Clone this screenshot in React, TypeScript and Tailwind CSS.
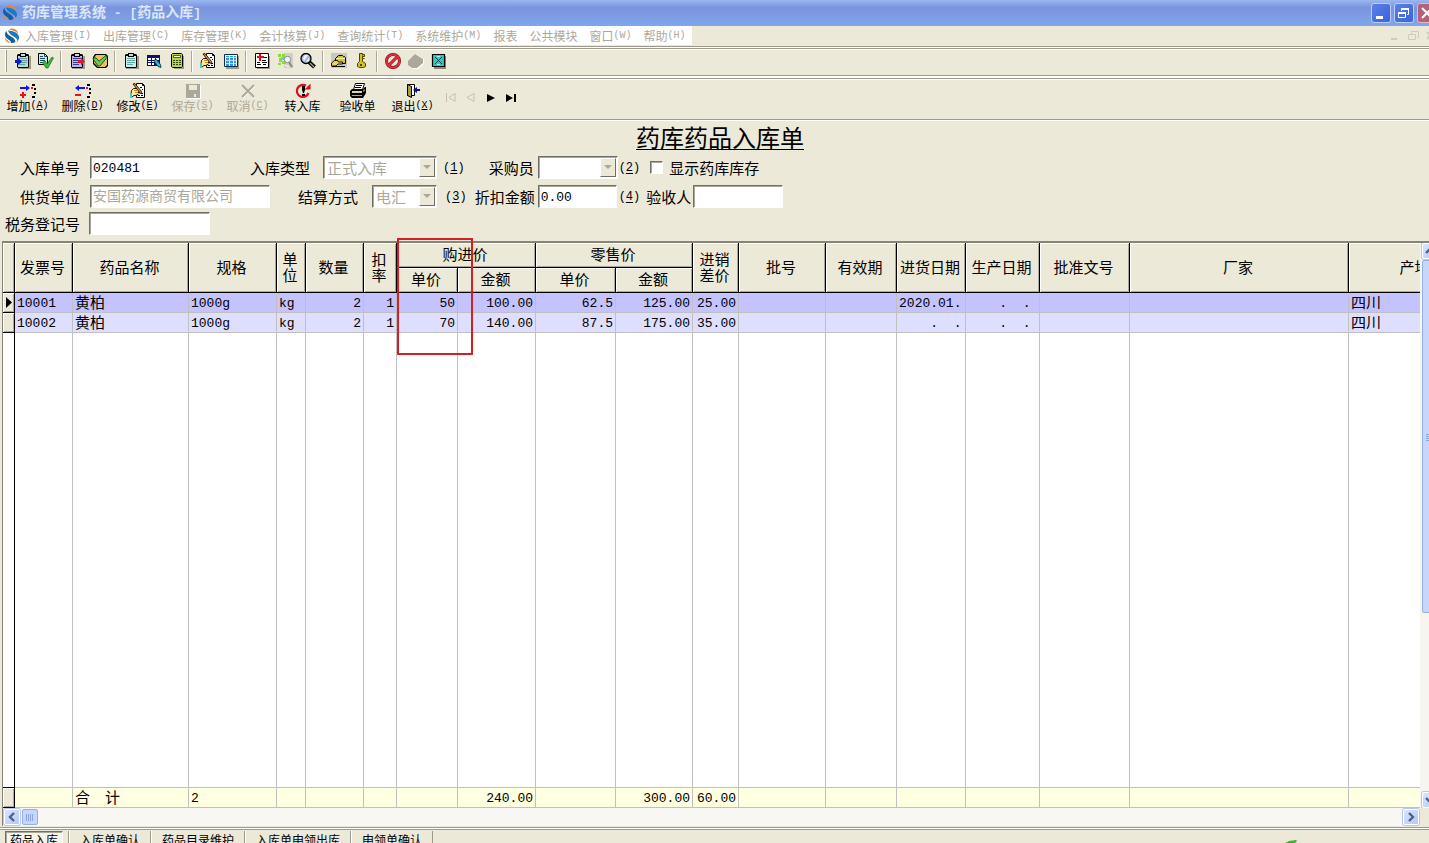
import React from 'react';

const BEVEL = 'shadow-[inset_1px_1px_0_#fff,inset_-1px_-1px_0_#aca899]';
const SUNKEN =
  'border border-t-[#716f64] border-l-[#716f64] border-r-white border-b-white shadow-[inset_1px_1px_0_#aca899]';

const menus = [
  { label: '入库管理', hotkey: 'I' },
  { label: '出库管理', hotkey: 'C' },
  { label: '库存管理', hotkey: 'K' },
  { label: '会计核算', hotkey: 'J' },
  { label: '查询统计', hotkey: 'T' },
  { label: '系统维护', hotkey: 'M' },
  { label: '报表' },
  { label: '公共模块' },
  { label: '窗口', hotkey: 'W' },
  { label: '帮助', hotkey: 'H' },
];

const Logo = () => (
  <svg className="shrink-0" width="16" height="16" viewBox="0 0 16 16" aria-hidden="true">
    <path d="M5 1.500C8-.5 13 .5 14.500 6 12 3 9 2.500 5 1.500z" fill="#ea8a26" />
    <path d="M4 2.500c5 .5 10.500 2 11 6.500.2 2-.8 3.500-1.500 4C13 8 5 8 4 2.500z" fill="#1b78c4" />
    <path d="M2.500 3C3 9 11 8 11.500 14c-1.500 1-3 1.200-4.500 1C7 11.500 1 11 1 7c0-2 .7-3.200 1.500-4z" fill="#155f9e" />
    <path d="M1 9.500c1 2.500 4 3 5 5.500-2.500-.3-5-2-5-5.500z" fill="#ea8a26" />
    <path d="M12.500 13.500l2-2c-.3 1.300-1 2.200-2 3z" fill="#ea8a26" />
  </svg>
);

/* Shared parts of the small 16px icons */
const Clipboard = ({ fill, line = '#4d8f8f' }: { fill: string; line?: string }) => (
  <>
    <path d="M3 3h13v13H3z" fill="#9c9a8c" />
    <path d="M3 1h10l1 1v12l-1 1H3l-1-1V2z" fill="#000" />
    <path d="M3 3h10v11H3z" fill={fill} />
    <path d="M5 0h6v4H5z" fill="#000" />
    <path d="M6 1h4v2H6z" fill="#c8d8e8" />
    <path d="M4 5.500h8M4 7.500h8M4 9.500h8M4 11.500h6" stroke={line} strokeWidth=".8" />
  </>
);

const EditSheet = () => (
  <>
    <path d="M6.500.5h6l2 2v12h-8z" fill="#fff" stroke="#000" />
    <path d="M12.500.5v2h2" stroke="#000" />
    <path d="M8 12.500h2M11 12.500h2M11 10.500h2M10 4.500h2M12 6.500h1" stroke="#000" />
    <path d="M1.500 7.500l2-2h5v2H8l1.500 1v1H8l1 1-1 1H7v1H4L2 14H.5z" fill="#ffe98c" stroke="#000" strokeWidth=".9" />
    <path d="M4 7.500h3M5 9.500h3" stroke="#c08a20" />
    <path d="M3 1l2-.5 6.500 8 .5 2.500-2-1z" fill="#d8902c" stroke="#000" strokeWidth=".8" />
    <path d="M0 10h2v5H0z" fill="#34d0d8" />
  </>
);

const icons: Record<string, React.ReactNode> = {
  receive: (
    <>
      <Clipboard fill="#b9d8d0" />
      <path d="M0 7h3V5l4 3.500L3 12v-2H0z" fill="#1018d8" />
    </>
  ),
  approve: (
    <>
      <path d="M.5.5h6l3 3v8h-9z" fill="#cdeaea" stroke="#000" />
      <path d="M6.500.5v3h3M2 3.500h3M2 5.500h5M2 7.500h5M2 9.500h3" stroke="#1c4a5a" />
      <path d="M4.500 9.500L7 8l2 3 5-7 1.500 1L10 15H8z" fill="#3fb544" stroke="#1c6a20" strokeWidth=".7" />
    </>
  ),
  issue: (
    <>
      <Clipboard fill="#b9b4ea" line="#1d1d7a" />
      <path d="M9 7h3V4.500l4 4-4 4V10H9z" fill="#e0142c" />
    </>
  ),
  audit: (
    <>
      <path d="M3 1h11l2 2v10l-2 2H5l-4-4V4z" fill="#000" />
      <path d="M4 2h9l2 2v8l-2 2H6L2 10V5z" fill="#f0c060" />
      <path d="M.8 5.500L4 4.800l3 3.400L14 2.500l1.200 1.700L8 13H6z" fill="#6ccc50" stroke="#154d16" strokeWidth=".9" />
    </>
  ),
  sheet: <Clipboard fill="#c9f0f0" />,
  query: (
    <>
      <path d="M1 2h13v11H1z" fill="#10106a" />
      <path d="M2 5h3v2H2zM6 5h3v2H6zM10 5h3v2h-3zM2 8h3v1H2zM6 8h3v1H6zM2 10h3v2H2zM6 10h2v2H6z" fill="#fff" />
      <path d="M7.500 7.500l3-1 4 5 .5 3-3-1z" fill="#35b6c4" stroke="#052a38" strokeWidth=".8" />
    </>
  ),
  calc: (
    <>
      <path d="M5 3h10v13H5z" fill="#9c9a8c" />
      <path d="M3.500.5h9l1 1v12l-1 1h-9l-1-1v-12z" fill="#b4d254" stroke="#000" />
      <path d="M4.500 2.500h7v2h-7z" fill="#f6ffd0" stroke="#34420c" strokeWidth=".8" />
      <path d="M4 7.500h8M4 9.500h8M4 11.500h8" stroke="#34420c" strokeDasharray="2 1" />
    </>
  ),
  edit: <EditSheet />,
  columns: (
    <>
      <path d="M3 3h13v13H3z" fill="#9c9a8c" />
      <path d="M1.500 1.500h13v12h-13z" fill="#fff" stroke="#0c2c50" />
      <path d="M3 3h3v10H3zM7 3h3v10H7zM11 3h2v10h-2z" fill="#2a9be0" />
      <path d="M2 4.500h12M2 7.500h12M2 10.500h12" stroke="#d6f0ff" strokeWidth=".8" />
    </>
  ),
  medical: (
    <>
      <path d="M3 3h13v13H3z" fill="#9c9a8c" />
      <path d="M1.500.5h13v14h-13z" fill="#fff" stroke="#000" />
      <path d="M5 1h2v2h3v2H7v3H5V5H3V3h2z" fill="#e01010" />
      <path d="M10 4.500h3M8 7.500h4M3 9.500h3M8 9.500h5M3 11.500h4M9 11.500h3" stroke="#000" />
    </>
  ),
  find: (
    <>
      <path d="M7 0h9v15H7z" fill="#d2cfc4" />
      <path d="M1 1h3v3H1zM5 1h3v5H5zM2 5h3v4H2zM5 8h4v3H5zM1 10h3v2H1z" fill="#8cd840" />
      <path d="M4 4h3v3H4z" fill="#7cc4d8" />
      <circle cx="10.500" cy="6.500" r="3.200" fill="#eef4f4" stroke="#8a8a84" />
      <path d="M12 9l3 5" stroke="#8a8a84" strokeWidth="2" />
      <path d="M8 12l4 2" stroke="#fff" />
    </>
  ),
  zoom: (
    <>
      <path d="M9 9l5.500 5" stroke="#000" strokeWidth="4" />
      <circle cx="6" cy="5.500" r="5" fill="#a9bbe0" stroke="#000" strokeWidth="1.300" />
      <path d="M3 5l2-3h3L4 8zM6 9l3-4v3z" fill="#eef4ff" />
      <path d="M10 10l4 4" stroke="#a4a4a4" strokeWidth="1.200" />
    </>
  ),
  hand: (
    <>
      <path d="M0 0h16v15H0z" fill="#c9c7c2" />
      <path d="M4.500 5.500l3-3h4l1 1h1l1 1v6h-10z" fill="#c9c832" stroke="#000" />
      <path d="M5 5.500h9" stroke="#f4f0a0" />
      <path d="M.5 10l3-2.500h3l1 1.500h4v2H7l-2 2H.5z" fill="#f0d060" stroke="#000" strokeWidth=".9" />
      <path d="M1 13.500h13" stroke="#000" />
    </>
  ),
  key: (
    <>
      <path d="M5.500.5h3v8l3 2v3l-2 1h-4l-2-1v-3l2-2z" fill="#d2c41e" stroke="#4c4400" />
      <path d="M8.500 1.500h2v2h-2M8.500 5.500h2" stroke="#4c4400" fill="#d2c41e" />
      <path d="M6 11h2v2H6z" fill="#4c4400" />
    </>
  ),
  forbid: (
    <>
      <circle cx="8" cy="8" r="6.500" fill="#eee4dc" stroke="#6e1414" strokeWidth="3" />
      <path d="M3.500 12.500l9-9" stroke="#6e1414" strokeWidth="3" />
      <circle cx="8" cy="8" r="6.500" stroke="#e03038" strokeWidth="2" />
      <path d="M3.500 12.500l9-9" stroke="#e03038" strokeWidth="2" />
    </>
  ),
  book: (
    <>
      <path d="M1 8.500L8 1l8 5v5l-6 5H5l-4-3z" fill="#fff" />
      <path d="M0 8l7-7 8 5v4l-6 5H4l-4-3z" fill="#aca899" />
    </>
  ),
  close: (
    <>
      <path d="M3 3h12v13H3z" fill="#8a887c" />
      <path d="M1.500 1.500h12v12h-12z" fill="#35c4bc" stroke="#000" strokeWidth="1.200" />
      <path d="M4 4l7 7M11 4l-7 7" stroke="#063f48" />
      <path d="M6 3.500h3M6 11.500h3" stroke="#aef0ec" />
    </>
  ),
  add: (
    <>
      <path d="M0 4h6V2l4 3-4 3V6H0z" fill="#1010f0" />
      <path d="M2 9h2v2h2v2H4v2H2v-2H0v-2h2z" fill="#f01010" />
      <path d="M12 1h3v2h-3zM14 5h2v2h-2zM14 9h2v2h-2zM12 13h3v2h-3z" fill="#000" />
      <path d="M11 4h2v2h-2z" fill="#f01010" />
    </>
  ),
  remove: (
    <>
      <path d="M10 4H4V2L0 5l4 3V6h6z" fill="#1010f0" />
      <path d="M0 11h6v2H0z" fill="#f01010" />
      <path d="M12 1h3v2h-3zM14 5h2v2h-2zM14 9h2v2h-2zM12 13h3v2h-3z" fill="#000" />
      <path d="M11 4h2v2h-2z" fill="#f01010" />
    </>
  ),
  save: (
    <>
      <path d="M2 2h14v14H2z" fill="#fff" />
      <path d="M1 1h14v14H1z" fill="#aca899" />
      <path d="M4 2h8v5H4zM9 11h2v3H9z" fill="#ece9d8" />
    </>
  ),
  cancel: (
    <>
      <path d="M3 3l12 12M15 3L3 15" stroke="#fff" />
      <path d="M2 2l12 12M14 2L2 14" stroke="#aca899" strokeWidth="1.800" />
    </>
  ),
  transfer: (
    <>
      <path d="M13.500 10A6 6 0 1 1 11 2.800" fill="none" stroke="#e01018" strokeWidth="2.200" />
      <path d="M9.500 6.500h6V.5z" fill="#e01018" />
      <path d="M7 3h3v4L9 10H8L7 7zM7 11h3v2H7z" fill="#000" />
    </>
  ),
  printer: (
    <>
      <path d="M5.500.5h9l-2 6h-9z" fill="#fff" stroke="#000" />
      <path d="M6 2.500h6M5 4.500h6" stroke="#000" />
      <path d="M2 6h11l2-2h1v6l-3 5H2l-2-2V8z" fill="#000" />
      <path d="M2 8h10v2H2z" fill="#d8d59a" />
      <path d="M2 12h10v1H2z" fill="#b8b430" />
      <path d="M13 7l2-1v2l-2 1z" fill="#88864a" />
    </>
  ),
  exit: (
    <>
      <path d="M2.500 1.500h7v11h-7z" fill="#fff" stroke="#000" />
      <path d="M2.500 1.500l4 2v11l-4-2z" fill="#a8a43a" stroke="#000" />
      <path d="M8 7l4-3v2h3v2h-3v2z" fill="#10108a" />
    </>
  ),
};

const Icon = ({ name }: { name: string }) => (
  <svg className="shrink-0" width="16" height="16" viewBox="0 0 16 16" fill="none" aria-hidden="true">
    {icons[name]}
  </svg>
);

const toolGroups = [
  ['receive', 'approve'],
  ['issue', 'audit'],
  ['sheet', 'query', 'calc'],
  ['edit', 'columns'],
  ['medical', 'find', 'zoom'],
  ['hand', 'key'],
  ['forbid', 'book', 'close'],
];

const actions = [
  { icon: 'add', label: '增加', hotkey: 'A' },
  { icon: 'remove', label: '删除', hotkey: 'D' },
  { icon: 'edit', label: '修改', hotkey: 'E' },
  { icon: 'save', label: '保存', hotkey: 'S', disabled: true },
  { icon: 'cancel', label: '取消', hotkey: 'C', disabled: true },
  { icon: 'transfer', label: '转入库' },
  { icon: 'printer', label: '验收单' },
  { icon: 'exit', label: '退出', hotkey: 'X' },
];

const navButtons = [
  { name: 'first', path: 'M1.500 1v9M10 1.500v8L4 5.500z', disabled: true },
  { name: 'prev', path: 'M9 1.500v8L2 5.500z', disabled: true },
  { name: 'next', path: 'M2 2v8l8-4z' },
  { name: 'last', path: 'M1 2v8l7-4zM9 2h2v8H9z' },
];

const tabs = ['入库单确认', '药品目录维护', '入库单申领出库', '申领单确认'];

type Column = { width: string; align?: string; cjk?: boolean };

const columns: Column[] = [
  { width: 'w-[58px]' },
  { width: 'w-[116px]', cjk: true },
  { width: 'w-[88px]' },
  { width: 'w-[29px]' },
  { width: 'w-[58px]', align: 'text-right' },
  { width: 'w-[33px]', align: 'text-right' },
  { width: 'w-[61px]', align: 'text-right' },
  { width: 'w-[78px]', align: 'text-right' },
  { width: 'w-[80px]', align: 'text-right' },
  { width: 'w-[77px]', align: 'text-right' },
  { width: 'w-[46px]', align: 'text-right' },
  { width: 'w-[87px]' },
  { width: 'w-[71px]' },
  { width: 'w-[69px]' },
  { width: 'w-[74px]' },
  { width: 'w-[90px]' },
  { width: 'w-[219px]' },
  { width: 'w-[134px]', cjk: true },
];

const rows = [
  ['10001', '黄柏', '1000g', 'kg', '2', '1', '50', '100.00', '62.5', '125.00', '25.00', '', '', '2020.01.', '    .  .', '', '', '四川'],
  ['10002', '黄柏', '1000g', 'kg', '2', '1', '70', '140.00', '87.5', '175.00', '35.00', '', '', '    .  .', '    .  .', '', '', '四川'],
];

const totals = ['', '合　计', '2', '', '', '', '', '240.00', '', '300.00', '60.00', '', '', '', '', '', '', ''];

const Hotkey = ({ letter }: { letter: string }) => (
  <span className="font-['Liberation_Mono',monospace] text-[10px]">
    (<span className="underline underline-offset-1">{letter}</span>)
  </span>
);

const FieldNumber = ({ n, className }: { n: number; className: string }) => (
  <span className={`font-['Liberation_Mono',monospace] text-[12px] ${className}`}>
    (<span className="underline underline-offset-2">{n}</span>)
  </span>
);

const Combo = ({ id, value, width }: { id: string; value: string; width: string }) => (
  <div className={`relative h-[23px] ${width}`}>
    <select
      id={id}
      disabled
      className={`block h-full w-full appearance-none rounded-none bg-white pl-[3px] text-[15px] leading-[21px] text-[#aca899] opacity-100 ${SUNKEN}`}
    >
      <option>{value}</option>
    </select>
    <span
      className="pointer-events-none absolute top-[2px] right-[2px] bottom-[2px] flex w-4 items-center justify-center border border-t-white border-l-white border-r-[#716f64] border-b-[#716f64] bg-[#ece9d8]"
    >
      <svg width="8" height="5" viewBox="0 0 8 5" aria-hidden="true">
        <path d="M0 0h8L4 4z" fill="#aca899" />
      </svg>
    </span>
  </div>
);

const ScrollButton = ({ path, label }: { path: string; label: string }) => (
  <button
    aria-label={label}
    className="flex h-4 w-4 shrink-0 items-center justify-center rounded-xs border border-white bg-gradient-to-br from-[#dbe5fe] to-[#b3c8f6] shadow-[0_0_0_1px_#b5c7ee]"
  >
    <svg width="10" height="10" viewBox="0 0 10 10" fill="none" stroke="#4d6185" strokeWidth="2.400" aria-hidden="true">
      <path d={path} />
    </svg>
  </button>
);

const GridRow = ({ cells, tone, current }: { cells: string[]; tone: string; current?: boolean }) => (
  <tr className={`h-5 ${tone}`}>
    <td className={`border-r border-b border-black bg-[#ece9d8] ${BEVEL}`}>
      {current && (
        <svg className="mx-auto" width="7" height="11" viewBox="0 0 7 11" aria-hidden="true">
          <path d="M1 0v11l6-5.500z" fill="#000" />
        </svg>
      )}
    </td>
    {columns.map((column, i) => (
      <td
        key={i}
        className={`overflow-hidden border-r border-b border-[#c0c0c0] px-[2px] leading-[17px] whitespace-pre ${
          column.cjk ? 'pb-[2px] text-[15px]' : "pt-[2px] font-['Liberation_Mono',monospace] text-[13px]"
        } ${column.align ?? ''}`}
      >
        {cells[i]}
      </td>
    ))}
  </tr>
);

const HeadCell = ({ children, ...rest }: React.ThHTMLAttributes<HTMLTableCellElement>) => (
  <th className={`border-r border-b border-black p-0 pr-[2px] pb-[2px] text-center leading-4 font-normal ${BEVEL}`} {...rest}>
    {children}
  </th>
);

const TitleBar = () => (
  <header className="flex h-[26px] shrink-0 items-center overflow-hidden bg-gradient-to-b from-[#9ab7ee] via-[#7a94de] via-30% to-[#80a6ea] pl-[2px]">
    <Logo />
    <h1 className="ml-1 flex-1 pb-[2px] text-[14px] leading-6 font-bold whitespace-pre text-[#dce6fa]">
      药库管理系统<span className="font-['Liberation_Mono',monospace] text-[13px]"> - [</span>药品入库
      <span className="font-['Liberation_Mono',monospace] text-[13px]">]</span>
    </h1>
    <div className="-mr-2 flex gap-[3px]">
      <button aria-label="最小化" className="h-5 w-5 rounded-[3px] border border-[#b9cdf6] bg-gradient-to-br from-[#5c80e6] to-[#3a62dc]">
        <svg width="18" height="18" viewBox="0 0 18 18" aria-hidden="true">
          <path d="M4 12h7v3H4z" fill="#fff" />
        </svg>
      </button>
      <button aria-label="还原" className="h-5 w-5 rounded-[3px] border border-[#b9cdf6] bg-gradient-to-br from-[#5c80e6] to-[#3a62dc]">
        <svg width="18" height="18" viewBox="0 0 18 18" fill="none" stroke="#fff" aria-hidden="true">
          <path d="M6.500 7V4.500h7v6H12M3.500 8.500h7v5h-7z" />
          <path d="M6 5h8M3 9h8" strokeWidth="2" />
        </svg>
      </button>
      <button aria-label="关闭" className="h-5 w-5 rounded-[3px] border border-[#e0b9c4] bg-[#b4617a]">
        <svg width="18" height="18" viewBox="0 0 18 18" stroke="#fff" strokeWidth="2" aria-hidden="true">
          <path d="M4 4l10 10M14 4L4 14" />
        </svg>
      </button>
    </div>
  </header>
);

const MenuBar = () => (
  <nav className="flex h-[19px] shrink-0 items-center justify-between overflow-hidden">
    <div className="flex h-full items-center gap-3 bg-white pr-[6px] pl-1 text-[12px] leading-4 text-[#aca899]">
      <span className="-mr-[7px]">
        <Logo />
      </span>
      {menus.map((menu) => (
        <button key={menu.label} disabled className="flex items-center whitespace-nowrap">
          <span>{menu.label}</span>
          {menu.hotkey && <span className="font-['Liberation_Mono',monospace] text-[10px]">({menu.hotkey})</span>}
        </button>
      ))}
    </div>
    <svg className="-mr-2" width="48" height="16" viewBox="0 0 48 16" fill="none" stroke="#cfccbc" aria-hidden="true">
      <path d="M2 11h6" strokeWidth="2" />
      <path d="M22.500 6V3.500h7v6H28M19.500 6.500h7v5h-7z" />
      <path d="M38 4l6 7M44 4l-6 7" strokeWidth="2" />
    </svg>
  </nav>
);

const EntryForm = () => (
  <form className="flex h-[121px] shrink-0 flex-col items-start pt-[3px] text-[15px] leading-[22px] whitespace-nowrap">
    <h2 className="ml-[636px] h-[33px] text-[24px] leading-7 underline decoration-1 underline-offset-2">药库药品入库单</h2>
    <div className="flex h-[23px] items-center pl-5">
      <label htmlFor="order-no">入库单号</label>
      <input id="order-no" defaultValue="020481" className={`ml-[10px] h-[23px] w-[119px] bg-white pt-[2px] pl-[2px] font-['Liberation_Mono',monospace] text-[13px] ${SUNKEN}`} />
      <label htmlFor="order-type" className="ml-[41px]">入库类型</label>
      <div className="ml-[13px]">
        <Combo id="order-type" value="正式入库" width="w-[114px]" />
      </div>
      <FieldNumber n={1} className="ml-[6px]" />
      <label htmlFor="buyer" className="ml-6">采购员</label>
      <div className="ml-1">
        <Combo id="buyer" value="" width="w-[80px]" />
      </div>
      <FieldNumber n={2} className="ml-[1px]" />
      <input id="show-stock" type="checkbox" className={`ml-[10px] h-[13px] w-[13px] appearance-none bg-white ${SUNKEN}`} />
      <label htmlFor="show-stock" className="ml-[6px]">显示药库库存</label>
    </div>
    <div className="mt-[6px] flex h-[23px] items-center pl-5">
      <label htmlFor="supplier">供货单位</label>
      <input id="supplier" disabled defaultValue="安国药源商贸有限公司" className={`ml-[10px] h-[23px] w-[180px] bg-white pb-1 pl-[2px] text-[14px] text-[#aca899] ${SUNKEN}`} />
      <label htmlFor="settle" className="ml-7">结算方式</label>
      <div className="ml-[14px]">
        <Combo id="settle" value="电汇" width="w-[65px]" />
      </div>
      <FieldNumber n={3} className="ml-2" />
      <label htmlFor="discount" className="ml-2">折扣金额</label>
      <input id="discount" defaultValue="0.00" className={`ml-[3px] h-[23px] w-[79px] bg-white pt-[2px] pl-[2px] font-['Liberation_Mono',monospace] text-[13px] ${SUNKEN}`} />
      <FieldNumber n={4} className="ml-[2px]" />
      <label htmlFor="inspector" className="ml-[6px]">验收人</label>
      <input id="inspector" className={`ml-[2px] h-[23px] w-[90px] bg-white ${SUNKEN}`} />
    </div>
    <div className="mt-1 flex h-[23px] items-center pl-[5px]">
      <label htmlFor="tax-no">税务登记号</label>
      <input id="tax-no" className={`ml-[9px] h-[23px] w-[121px] bg-white ${SUNKEN}`} />
    </div>
  </form>
);

const StockGrid = () => (
  <section className="relative ml-[2px] flex min-h-0 flex-1 flex-col border-t-2 border-l border-[#85837a]">
    <div className="flex min-h-0 flex-1">
      <div className="min-w-0 flex-1 overflow-hidden bg-white">
        <table className="h-full w-[1480px] table-fixed border-separate border-spacing-0 text-[15px]">
          <colgroup>
            <col className="w-3" />
            {columns.map((column, i) => (
              <col key={i} className={column.width} />
            ))}
          </colgroup>
          <thead className="bg-[#ece9d8]">
            <tr className="h-[25px]">
              <HeadCell rowSpan={2} />
              <HeadCell rowSpan={2}>发票号</HeadCell>
              <HeadCell rowSpan={2}>药品名称</HeadCell>
              <HeadCell rowSpan={2}>规格</HeadCell>
              <HeadCell rowSpan={2}>单<br />位</HeadCell>
              <HeadCell rowSpan={2}>数量</HeadCell>
              <HeadCell rowSpan={2}>扣<br />率</HeadCell>
              <HeadCell colSpan={2}>购进价</HeadCell>
              <HeadCell colSpan={2}>零售价</HeadCell>
              <HeadCell rowSpan={2}>进销<br />差价</HeadCell>
              <HeadCell rowSpan={2}>批号</HeadCell>
              <HeadCell rowSpan={2}>有效期</HeadCell>
              <HeadCell rowSpan={2}>进货日期</HeadCell>
              <HeadCell rowSpan={2}>生产日期</HeadCell>
              <HeadCell rowSpan={2}>批准文号</HeadCell>
              <HeadCell rowSpan={2}>厂家</HeadCell>
              <HeadCell rowSpan={2}>产地</HeadCell>
            </tr>
            <tr className="h-[25px]">
              <HeadCell>单价</HeadCell>
              <HeadCell>金额</HeadCell>
              <HeadCell>单价</HeadCell>
              <HeadCell>金额</HeadCell>
            </tr>
          </thead>
          <tbody>
            <GridRow cells={rows[0]} tone="bg-[#c5c3ff]" current />
            <GridRow cells={rows[1]} tone="bg-[#dedeff]" />
            {/* Empty area takes the remaining height */}
            <tr>
              <td className="border-r border-b border-black" />
              {columns.map((_, i) => (
                <td key={i} className="border-r border-b border-[#c0c0c0]" />
              ))}
            </tr>
          </tbody>
          <tfoot>
            <GridRow cells={totals} tone="bg-[#ffffe1]" />
          </tfoot>
        </table>
      </div>

      {/* Vertical scrollbar */}
      <div className="flex w-[9px] shrink-0 flex-col items-start overflow-hidden bg-[#f6f5f0] pl-[2px]">
        <ScrollButton path="M1 7l4-4 4 4" label="向上滚动" />
        <div className="mt-[1px] flex h-5/8 w-4 items-center justify-center rounded-xs border border-[#98b0e0] bg-[#c8d6fb]">
          <svg width="8" height="8" viewBox="0 0 8 8" stroke="#8aa5e0" aria-hidden="true">
            <path d="M0 1.500h8M0 3.500h8M0 5.500h8M0 7.500h8" />
          </svg>
        </div>
        <div className="flex-1" />
        <ScrollButton path="M1 3l4 4 4-4" label="向下滚动" />
      </div>
    </div>

    {/* Horizontal scrollbar */}
    <div className="mr-[9px] flex h-[18px] shrink-0 items-center gap-[2px] bg-[#f8f7f3] px-[1px]">
      <ScrollButton path="M7 1L3 5l4 4" label="向左滚动" />
      <div className="flex h-4 w-4 items-center justify-center rounded-xs border border-[#98b0e0] bg-[#c8d6fb]">
        <svg width="8" height="7" viewBox="0 0 8 7" stroke="#8aa5e0" aria-hidden="true">
          <path d="M.5 0v7M2.500 0v7M4.500 0v7M6.500 0v7" />
        </svg>
      </div>
      <div className="flex-1" />
      <ScrollButton path="M3 1l4 4-4 4" label="向右滚动" />
    </div>

    {/* Marked price column */}
    <div className="pointer-events-none absolute -top-[5px] left-[394px] h-[117px] w-[76px] border-2 border-[#d42020]" />
  </section>
);

const App = () => {
  return (
    <div className="flex h-screen min-h-[480px] flex-col overflow-hidden bg-[#ece9d8] font-['Noto_Sans_CJK_SC',sans-serif] text-black">
      <TitleBar />
      <MenuBar />

      {/* Icon toolbar */}
      <div className="mt-[1px] flex h-[30px] shrink-0 items-center border-y border-[#9d9a8d] shadow-[inset_0_1px_0_#fff,inset_0_2px_0_#9d9a8d,inset_0_3px_0_#fff,0_2px_0_#fff]">
        <span className="mr-1 ml-[5px] h-[22px] w-[2px] border-r border-[#9d9a8d] bg-white" />
        {toolGroups.map((group, i) => (
          <React.Fragment key={i}>
            {i > 0 && <span className="mx-[3px] h-[21px] w-[2px] border-l border-[#aca899] bg-white" />}
            {group.map((name) => (
              <button key={name} aria-label={name} className="flex w-[23px] justify-center">
                <Icon name={name} />
              </button>
            ))}
          </React.Fragment>
        ))}
      </div>

      {/* Action toolbar */}
      <div className="mt-[2px] flex h-[42px] shrink-0 items-center border-y border-[#9d9a8d] pb-[3px] shadow-[inset_0_1px_0_#fff,0_1px_0_#fff]">
        {actions.map((action) => (
          <button
            key={action.label}
            disabled={action.disabled}
            className="flex w-[55px] flex-col items-center text-[12px] leading-[14px] whitespace-nowrap disabled:text-[#aca899]"
          >
            <Icon name={action.icon} />
            <span className="flex items-center">
              {action.label}
              {action.hotkey && <Hotkey letter={action.hotkey} />}
            </span>
          </button>
        ))}
        {navButtons.map((nav) => (
          <button key={nav.name} aria-label={nav.name} disabled={nav.disabled} className="flex w-5 justify-center">
            <svg
              width="11"
              height="11"
              viewBox="0 0 11 11"
              fill={nav.disabled ? 'none' : '#000'}
              stroke={nav.disabled ? '#c4c1b2' : 'none'}
              aria-hidden="true"
            >
              <path d={nav.path} />
            </svg>
          </button>
        ))}
      </div>

      <EntryForm />
      <StockGrid />

      {/* Window tabs */}
      <div className="mt-[1px] flex h-4 shrink-0 items-start overflow-hidden border-t border-[#9d9a8d] pl-[5px] text-[12px] leading-4 shadow-[inset_0_1px_0_#fff,inset_0_2px_0_#9d9a8d]">
        <button className={`mt-[3px] mr-[5px] h-[18px] bg-[#f6f4ec] px-1 ${SUNKEN}`}>药品入库</button>
        <div className="mt-[3px] flex border-l border-[#9d9a8d]">
          {tabs.map((tab) => (
            <button key={tab} className="h-[18px] border-r border-[#9d9a8d] pr-[10px] pl-[11px] shadow-[inset_1px_0_0_#fff]">
              {tab}
            </button>
          ))}
        </div>
        <svg className="mt-3 mr-[132px] ml-auto" width="12" height="3" viewBox="0 0 12 3" aria-hidden="true">
          <path d="M0 3l4-2 7-1 1 1-2 2z" fill="#3fb52a" />
        </svg>
      </div>
    </div>
  );
};

export default App;
